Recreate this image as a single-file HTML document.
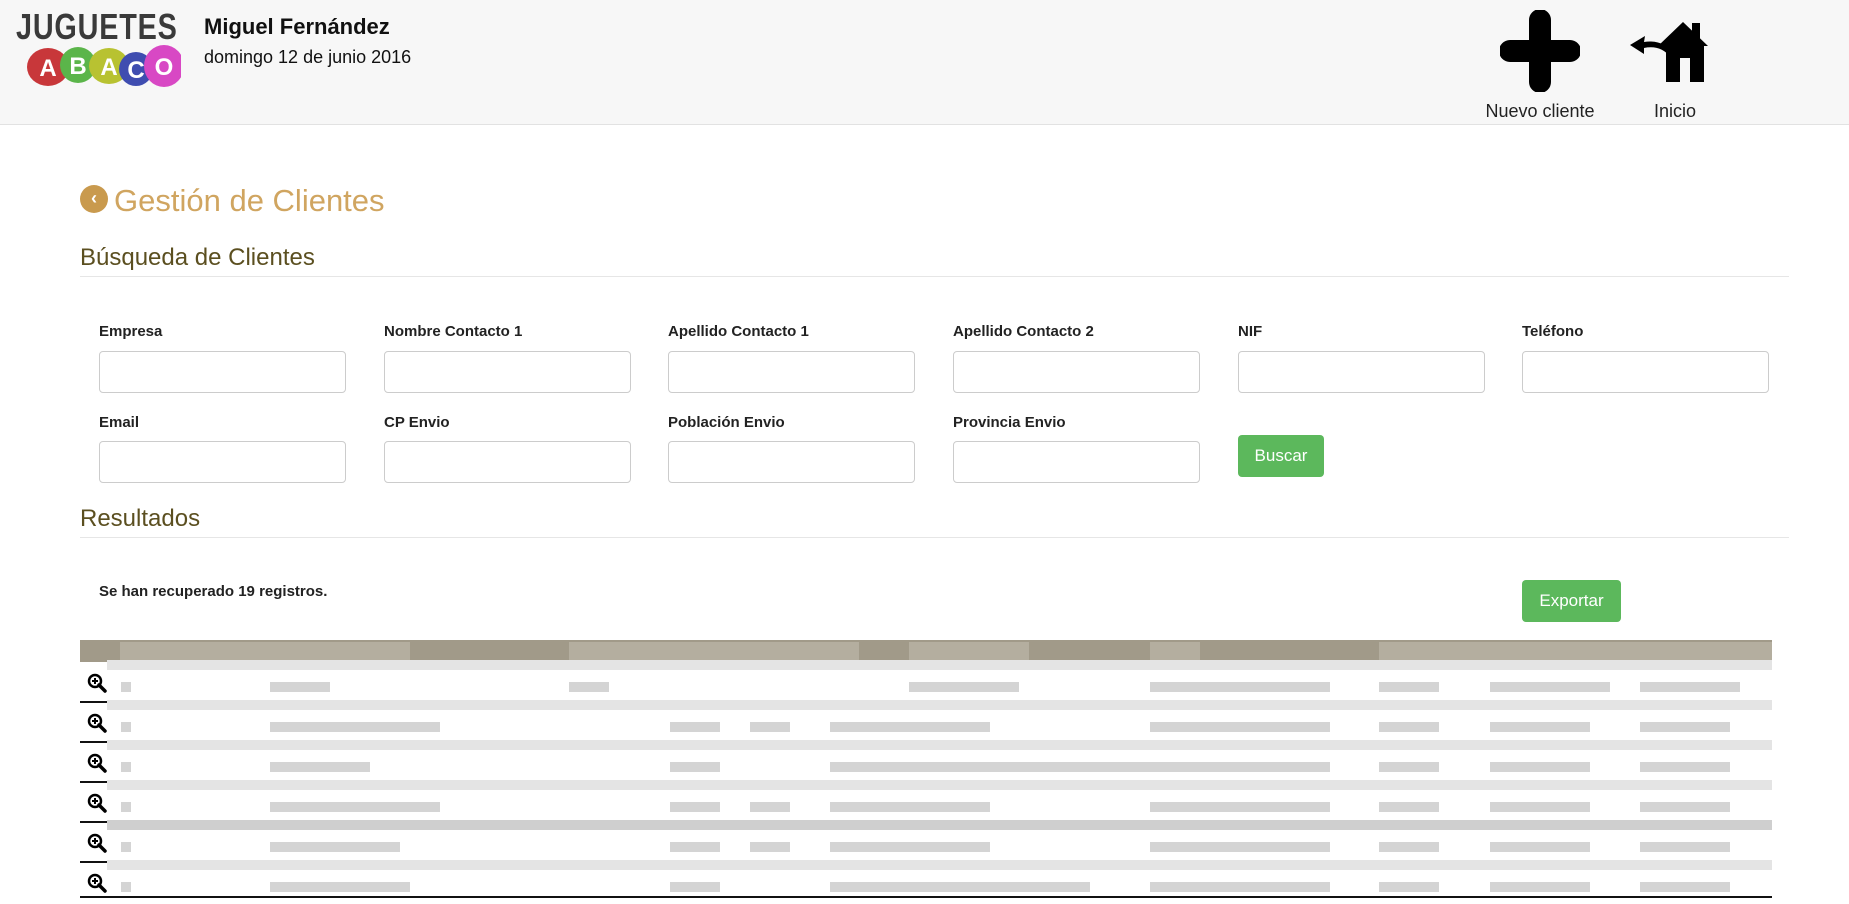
<!DOCTYPE html>
<html><head><meta charset="utf-8"><style>
*{box-sizing:border-box;margin:0;padding:0}
body{width:1849px;height:904px;background:#fff;font-family:"Liberation Sans",sans-serif;position:relative;overflow:hidden}
.a{position:absolute}
.hdr{left:0;top:0;width:1849px;height:125px;background:#f7f7f7;border-bottom:1px solid #e2e2e2}
.lbl{font-size:15px;font-weight:bold;color:#222}
.inp{width:247px;height:42px;border:1px solid #ccc;border-radius:4px;background:#fff}
.btn{background:#5cb85c;border-radius:4px;color:#fff;font-size:17px;text-align:center}
.g{position:absolute;height:10px;background:#d4d4d4}
</style></head><body>
<div class="a hdr"></div>
<div class="a" style="left:16px;top:6px;font:bold 36px 'Liberation Sans',sans-serif;color:#3a3a3a;letter-spacing:1px;transform:scaleX(0.8);transform-origin:left">JUGUETES</div>
<svg class="a" style="left:26px;top:44px" width="155" height="46">
<ellipse cx="22" cy="23" rx="21" ry="19" fill="#c8373a"/><ellipse cx="52" cy="21" rx="18" ry="18" fill="#5bb54a"/><ellipse cx="83" cy="22" rx="20" ry="18" fill="#b8c231"/><ellipse cx="110" cy="25" rx="17" ry="17" fill="#3f4db0"/><ellipse cx="138" cy="22" rx="20" ry="21" fill="#d848c4"/>
<g font-family="Liberation Sans" font-weight="bold" font-size="24" fill="#fff" text-anchor="middle"><text x="22" y="32">A</text><text x="52" y="30">B</text><text x="83" y="31">A</text><text x="110" y="34">C</text><text x="138" y="31">O</text></g></svg>
<div class="a" style="left:204px;top:14px;font-size:22px;font-weight:bold;color:#111">Miguel Fernández</div>
<div class="a" style="left:204px;top:47px;font-size:18px;color:#111">domingo 12 de junio 2016</div>
<svg class="a" style="left:1500px;top:10px" width="80" height="82"><path d="M40 10V72M10 41H70" stroke="#000" stroke-width="22" stroke-linecap="round"/></svg>
<div class="a" style="left:1470px;top:101px;width:140px;text-align:center;font-size:18px;color:#222">Nuevo cliente</div>
<svg class="a" style="left:1628px;top:18px" width="82" height="66"><path d="M30 28L55 4L80 28H76V64H62V40H52V64H38V28Z" fill="#000"/><rect x="64" y="5" width="8" height="18" fill="#000"/><path d="M46 36C40 26 28 22 16 24L17 18L2 27L16 36L16 30C26 28 36 30 43 40Z" fill="#000"/></svg>
<div class="a" style="left:1620px;top:101px;width:110px;text-align:center;font-size:18px;color:#222">Inicio</div>

<div class="a" style="left:80px;top:185px;width:28px;height:28px;border-radius:50%;background:#c99a4e;color:#fff;font-size:18px;font-weight:bold;text-align:center;line-height:27px">‹</div>
<div class="a" style="left:114px;top:183px;font-size:31px;color:#d0a560">Gestión de Clientes</div>
<div class="a" style="left:80px;top:244px;font-size:24px;color:#5b4f20">Búsqueda de Clientes</div>
<div class="a" style="left:80px;top:276px;width:1709px;height:1px;background:#e6e6e6"></div>

<div class="a lbl" style="left:99px;top:323px">Empresa</div>
<div class="a lbl" style="left:384px;top:323px">Nombre Contacto 1</div>
<div class="a lbl" style="left:668px;top:323px">Apellido Contacto 1</div>
<div class="a lbl" style="left:953px;top:323px">Apellido Contacto 2</div>
<div class="a lbl" style="left:1238px;top:323px">NIF</div>
<div class="a lbl" style="left:1522px;top:323px">Teléfono</div>
<div class="a inp" style="left:99px;top:351px"></div>
<div class="a inp" style="left:384px;top:351px"></div>
<div class="a inp" style="left:668px;top:351px"></div>
<div class="a inp" style="left:953px;top:351px"></div>
<div class="a inp" style="left:1238px;top:351px"></div>
<div class="a inp" style="left:1522px;top:351px"></div>
<div class="a lbl" style="left:99px;top:414px">Email</div>
<div class="a lbl" style="left:384px;top:414px">CP Envio</div>
<div class="a lbl" style="left:668px;top:414px">Población Envio</div>
<div class="a lbl" style="left:953px;top:414px">Provincia Envio</div>
<div class="a inp" style="left:99px;top:441px"></div>
<div class="a inp" style="left:384px;top:441px"></div>
<div class="a inp" style="left:668px;top:441px"></div>
<div class="a inp" style="left:953px;top:441px"></div>
<div class="a btn" style="left:1238px;top:435px;width:86px;height:42px;line-height:42px">Buscar</div>

<div class="a" style="left:80px;top:505px;font-size:24px;color:#5b4f20">Resultados</div>
<div class="a" style="left:80px;top:537px;width:1709px;height:1px;background:#e6e6e6"></div>
<div class="a lbl" style="left:99px;top:583px">Se han recuperado 19 registros.</div>
<div class="a btn" style="left:1522px;top:580px;width:99px;height:42px;line-height:42px">Exportar</div>

<div class="a" style="left:80px;top:640px;width:1692px;height:22px;background:#a19a89"></div>
<div class="a" style="left:120px;top:642px;width:290px;height:18px;background:#b4ae9f"></div>
<div class="a" style="left:569px;top:642px;width:290px;height:18px;background:#b4ae9f"></div>
<div class="a" style="left:909px;top:642px;width:120px;height:18px;background:#b4ae9f"></div>
<div class="a" style="left:1150px;top:642px;width:50px;height:18px;background:#b4ae9f"></div>
<div class="a" style="left:1379px;top:642px;width:393px;height:18px;background:#b4ae9f"></div>

<div id="rows"></div>
<div class="a" style="left:80px;top:896px;width:1692px;height:2px;background:#111"></div>
<script>
var r=document.getElementById('rows'),h='';
var cols=[[121,10],[270,60],[569,40],[909,110],[1150,180],[1379,60],[1490,120],[1640,100]];
var extra=[[],[[270,170],[670,50],[750,40],[830,160]],[[270,100],[670,50],[830,480]],[[270,170],[670,50],[750,40],[830,160]],[[270,130],[670,50],[750,40],[830,160]],[[270,140],[670,50],[830,260]]];
for(var i=0;i<6;i++){var y=660+i*40;
h+='<div class="a" style="left:107px;top:'+y+'px;width:1665px;height:10px;background:'+(i==4?'#cfcfcf':'#e4e4e4')+'"></div>';
if(i>0)h+='<div class="a" style="left:80px;top:'+(y+1)+'px;width:27px;height:2px;background:#111"></div>';
h+='<svg class="a" style="left:87px;top:'+(y+13)+'px" width="22" height="22"><circle cx="8" cy="8" r="6" fill="none" stroke="#000" stroke-width="2.5"/><path d="M8 5V11M5 8H11" stroke="#000" stroke-width="2"/><path d="M12 12L18 18" stroke="#000" stroke-width="3.5" stroke-linecap="round"/></svg>';
var c=extra[i].length?extra[i].concat([[121,10],[1150,180],[1379,60],[1490,100],[1640,90]]):cols;
for(var j=0;j<c.length;j++)h+='<div class="g" style="left:'+c[j][0]+'px;top:'+(y+22)+'px;width:'+c[j][1]+'px"></div>';}
r.innerHTML=h;
</script>
</body></html>
